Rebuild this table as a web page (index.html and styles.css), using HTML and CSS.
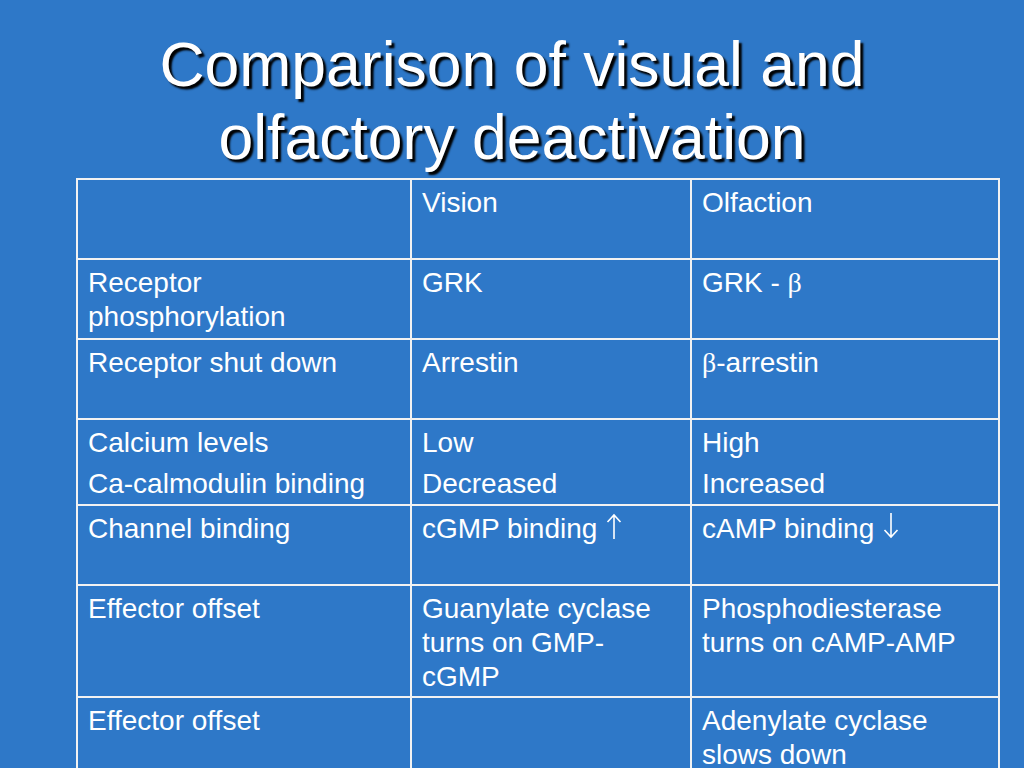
FILE: index.html
```html
<!DOCTYPE html>
<html>
<head>
<meta charset="utf-8">
<link rel="stylesheet" href="styles.css">
</head>
<body>
<div class="slide">
  <h1 class="title">Comparison of visual and<br>olfactory deactivation</h1>
  <table class="grid">
    <colgroup><col class="c1"><col class="c2"><col class="c3"></colgroup>
    <tr class="r80"><td></td><td>Vision</td><td>Olfaction</td></tr>
    <tr class="r80"><td>Receptor phosphorylation</td><td>GRK</td><td>GRK - <span class="greek">β</span></td></tr>
    <tr class="r80"><td>Receptor shut down</td><td>Arrestin</td><td><span class="greek">β</span>-arrestin</td></tr>
    <tr class="r86"><td><p>Calcium levels</p><p>Ca-calmodulin binding</p></td><td><p>Low</p><p>Decreased</p></td><td><p>High</p><p>Increased</p></td></tr>
    <tr class="r80"><td>Channel binding</td><td>cGMP binding <svg class="arrow" viewBox="0 0 18 26" width="18" height="26"><path d="M9 2V26M2.5 9L9 2L15.5 9" fill="none" stroke="#fff" stroke-width="1.6"/></svg></td><td>cAMP binding <svg class="arrow" viewBox="0 0 18 26" width="18" height="26"><path d="M9 0V24M2.5 17L9 24L15.5 17" fill="none" stroke="#fff" stroke-width="1.6"/></svg></td></tr>
    <tr class="r112"><td>Effector offset</td><td>Guanylate cyclase turns on GMP-cGMP</td><td>Phosphodiesterase turns on cAMP-AMP</td></tr>
    <tr class="r80"><td>Effector offset</td><td></td><td>Adenylate cyclase slows down</td></tr>
  </table>
</div>
</body>
</html>
```
FILE: styles.css
```css
html, body {
  margin: 0;
  padding: 0;
  background: #2e78c8;
}
.slide {
  width: 1024px;
  height: 768px;
  overflow: hidden;
  background: #2e78c8;
  font-family: "Liberation Sans", Arial, sans-serif;
  color: #ffffff;
}
.title {
  margin: 0;
  padding-top: 28px;
  height: 150px;
  font-weight: normal;
  font-size: 62.5px;
  line-height: 73px;
  text-align: center;
  text-shadow: 3px 3px 2px #000000;
}
.grid {
  margin-left: 76px;
  border-collapse: collapse;
  table-layout: fixed;
  width: 924px;
  font-size: 28px;
  line-height: 34px;
}
.c1 { width: 334px; }
.c2 { width: 280px; }
.c3 { width: 308px; }
.grid td {
  border: 2px solid #f2f2f2;
  vertical-align: top;
  padding: 6px 10px 2px 10px;
}
.grid p { margin: 0 0 7px 0; }
.grid p:last-child { margin-bottom: 0; }
.r80 { height: 80px; }
.r86 { height: 86px; }
.r112 { height: 112px; }
.greek { font-family: "Liberation Serif", "Times New Roman", serif; }
.arrow { vertical-align: baseline; margin-bottom: -1px; }
```
